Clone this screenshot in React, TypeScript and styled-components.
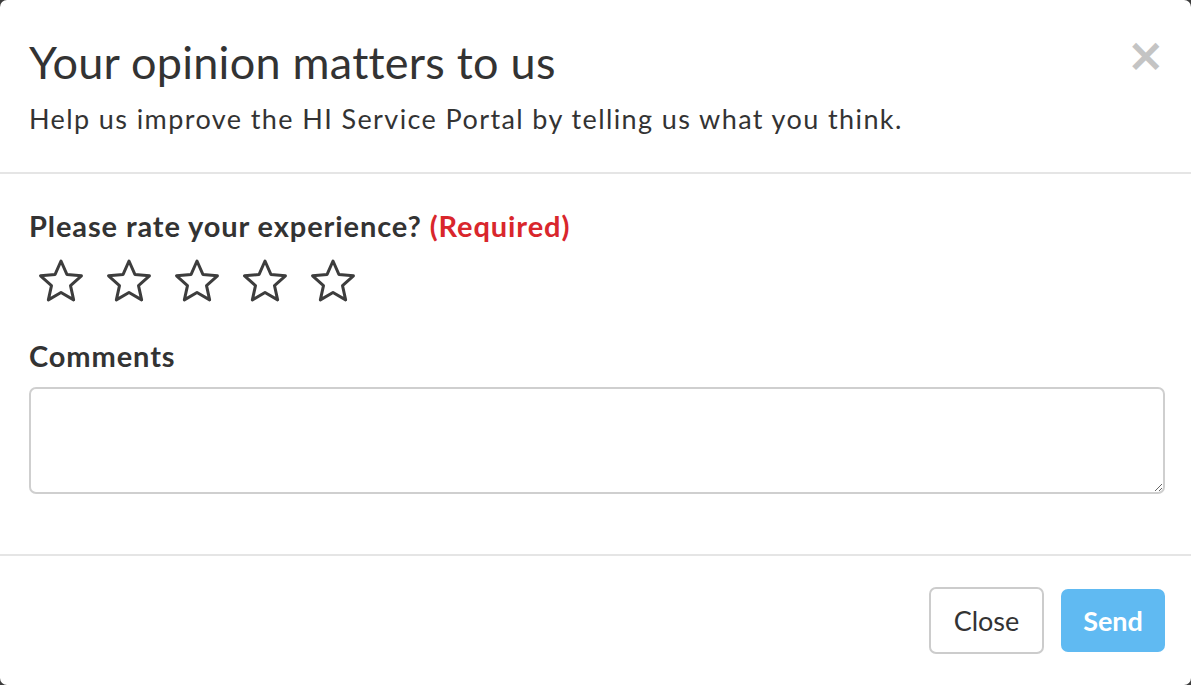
import React from "react";
import styled, { createGlobalStyle } from "styled-components";

const Global = createGlobalStyle`
  html, body { margin: 0; padding: 0; background: #3c3c3c; }
  body { font-family: Lato, "Open Sans", Arial, sans-serif; color: #333; }
  * { box-sizing: border-box; }
`;

const Modal = styled.div`
  width: 1191px;
  height: 685px;
  background: #fff;
  border-radius: 7px;
  display: flex;
  flex-direction: column;
  overflow: hidden;
`;

const Header = styled.div`
  display: flex;
  align-items: flex-start;
  justify-content: space-between;
  padding: 38px 26px 36px 29px;
  border-bottom: 2px solid #e5e5e5;
`;

const HeaderText = styled.div`
  display: flex;
  flex-direction: column;
  gap: 16px;
`;

const Title = styled.h4`
  margin: 0;
  font-size: 45px;
  line-height: 48px;
  font-weight: 400;
  letter-spacing: 0.25px;
  color: #333;
`;

const Subtitle = styled.p`
  margin: 0;
  font-size: 27px;
  line-height: 34px;
  letter-spacing: 1.4px;
  color: #333;
`;

const CloseX = styled.button`
  border: 0;
  background: none;
  padding: 0;
  margin-top: -6px;
  font-family: "DejaVu Sans", sans-serif;
  font-size: 46px;
  line-height: 46px;
  font-weight: 700;
  color: #c4c4c4;
  cursor: pointer;
`;

const Body = styled.div`
  flex: 1;
  display: flex;
  flex-direction: column;
  padding: 34px 26px 0 29px;
  border-bottom: 2px solid #e5e5e5;
`;

const Label = styled.label`
  display: block;
  font-size: 29px;
  line-height: 36px;
  font-weight: 700;
  letter-spacing: 0.9px;
  color: #333;
`;

const Required = styled.span`
  color: #d9262c;
`;

const Stars = styled.div`
  display: flex;
  gap: 20px;
  margin: 15px 0 35px 8px;
`;

const StarButton = styled.span`
  display: block;
  width: 48px;
  height: 44px;
`;

const TextArea = styled.textarea`
  margin-top: 13px;
  width: 100%;
  height: 107px;
  border: 2px solid #cfcfcf;
  border-radius: 7px;
  resize: both;
  font-family: inherit;
  font-size: 26px;
  padding: 8px 12px;
  outline: none;
`;

const Footer = styled.div`
  height: 129px;
  display: flex;
  align-items: center;
  justify-content: flex-end;
  gap: 17px;
  padding: 0 26px 0 29px;
`;

const Button = styled.button<{ $primary?: boolean }>`
  font-family: inherit;
  font-size: 27px;
  border-radius: 7px;
  cursor: pointer;
  display: flex;
  align-items: center;
  justify-content: center;
  ${(p) =>
    p.$primary
      ? `
    width: 104px;
    height: 63px;
    background: #60baf2;
    border: 0;
    color: #fff;
    font-weight: 700;
  `
      : `
    width: 115px;
    height: 67px;
    background: #fff;
    border: 2px solid #cccccc;
    color: #333;
    font-weight: 400;
  `}
`;

const StarIcon = () => (
  <svg width="48" height="44" viewBox="0 0 48 44">
    <polygon
      points="24,2 29.88,15.41 44.45,16.86 33.51,26.59 36.64,40.89 24,33.5 11.36,40.89 14.49,26.59 3.55,16.86 18.12,15.41"
      fill="none"
      stroke="#3d3d3d"
      strokeWidth="3"
      strokeLinejoin="round"
    />
  </svg>
);

export default function App() {
  return (
    <>
      <Global />
      <Modal>
        <Header>
          <HeaderText>
            <Title>Your opinion matters to us</Title>
            <Subtitle>Help us improve the HI Service Portal by telling us what you think.</Subtitle>
          </HeaderText>
          <CloseX aria-label="Close">×</CloseX>
        </Header>
        <Body>
          <Label>
            Please rate your experience? <Required>(Required)</Required>
          </Label>
          <Stars>
            {[1, 2, 3, 4, 5].map((i) => (
              <StarButton key={i}>
                <StarIcon />
              </StarButton>
            ))}
          </Stars>
          <Label>Comments</Label>
          <TextArea />
        </Body>
        <Footer>
          <Button>Close</Button>
          <Button $primary>Send</Button>
        </Footer>
      </Modal>
    </>
  );
}
